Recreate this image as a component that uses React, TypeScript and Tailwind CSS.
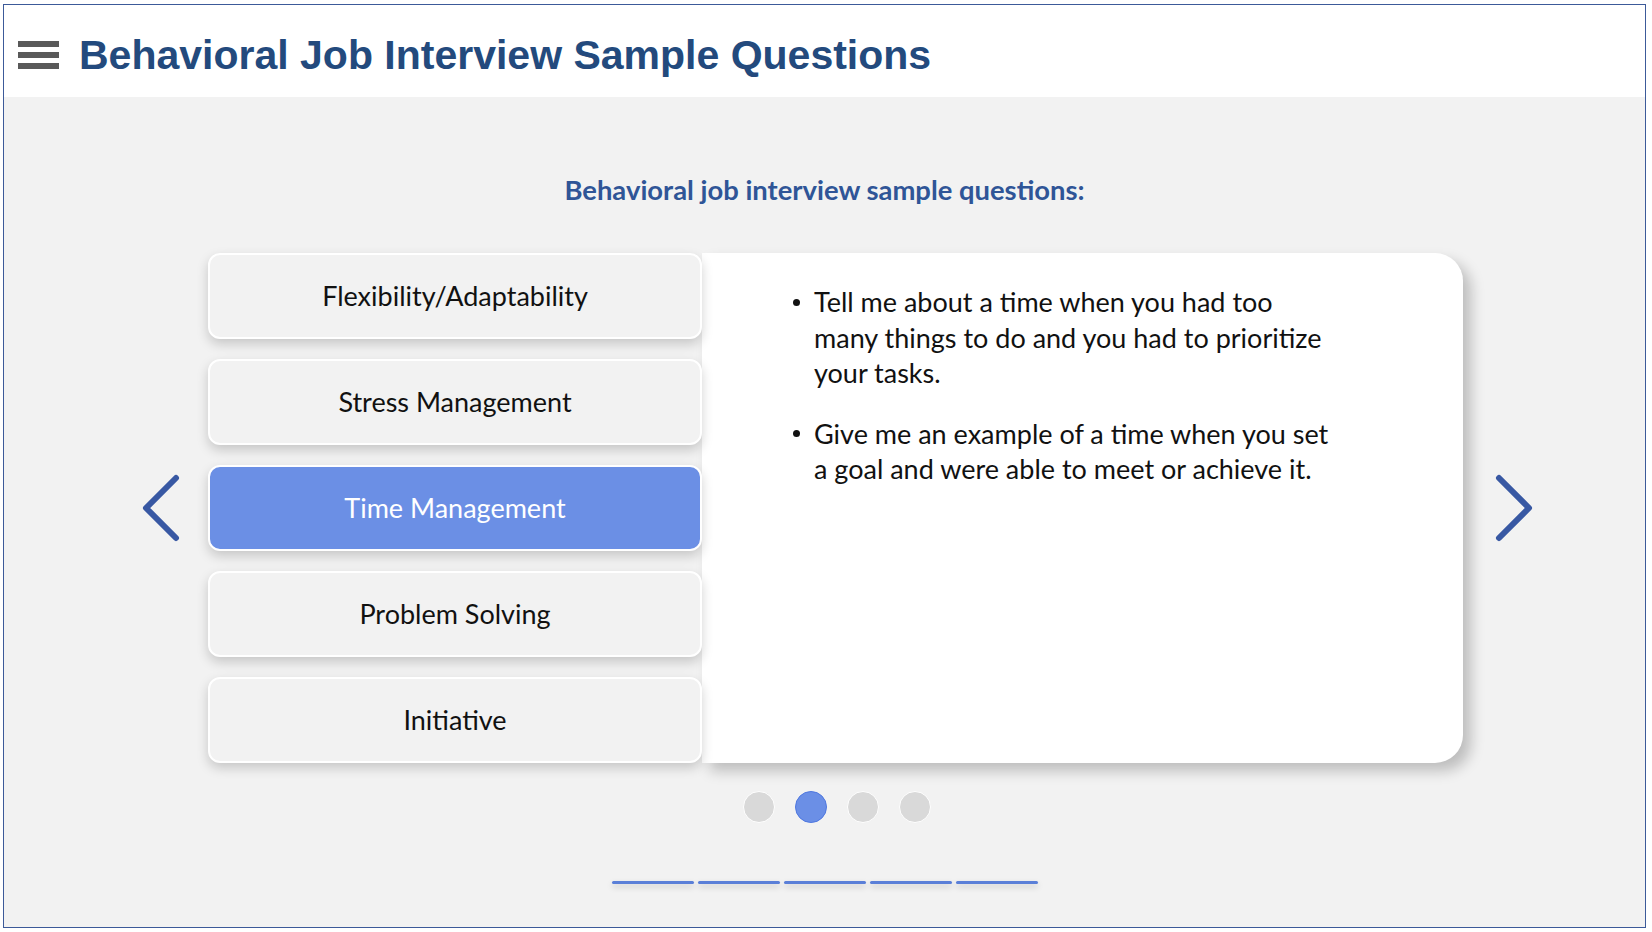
import React, { FC } from "react";

const topics = [
  "Flexibility/Adaptability",
  "Stress Management",
  "Time Management",
  "Problem Solving",
  "Initiative",
];

const Arrow: FC<{ dir: "left" | "right"; className?: string }> = ({ dir, className }) => (
  <svg viewBox="0 0 40 70" className={`w-[40px] h-[70px] shrink-0 ${className ?? ""}`}>
    <path
      d={dir === "left" ? "M35 5 L5 35 L35 65" : "M5 5 L35 35 L5 65"}
      fill="none"
      stroke="#3858a3"
      strokeWidth="6"
      strokeLinecap="round"
      strokeLinejoin="round"
    />
  </svg>
);

const Bullet: FC = () => (
  <span className="w-[21px] shrink-0 h-[35.5px] flex items-center pt-[1px]">
    <span className="w-[7px] h-[7px] rounded-full bg-[#111]" />
  </span>
);

const App: FC = () => {
  return (
    <div className="w-[1652px] h-[932px] bg-white pl-[3px] pt-[4px] font-['Lato',sans-serif]">
      <div className="w-[1643px] h-[924px] border border-[#3c5a99] flex flex-col">
        <header className="h-[92px] shrink-0 bg-white flex items-center pt-[8px] pl-[14px]">
          <div className="w-[41px] flex flex-col gap-[5px]">
            <div className="h-[6px] bg-[#595959]" />
            <div className="h-[6px] bg-[#595959]" />
            <div className="h-[6px] bg-[#595959]" />
          </div>
          <h1 className="ml-[20px] text-[41px] font-bold text-[#234a7d] font-['Liberation_Sans',Arial,sans-serif] leading-none">
            Behavioral Job Interview Sample Questions
          </h1>
        </header>

        <main className="flex-1 bg-[#f2f2f2] flex flex-col">
          <h2 className="mt-[75px] text-center text-[27.4px] leading-[36px] font-bold text-[#2f5597]">
            Behavioral job interview sample questions:
          </h2>

          <div className="mt-[45px] ml-[137px] flex items-center">
            <Arrow dir="left" />
            <div className="ml-[27px] w-[1255px] h-[510px] flex">
              <div className="relative z-10 w-[494px] shrink-0 flex flex-col gap-[20px]">
                {topics.map((t, i) => (
                  <div
                    key={t}
                    className={`h-[86px] rounded-[12px] border-2 border-white flex items-center justify-center text-[27px] shadow-[0_5px_12px_rgba(0,0,0,0.18)] ${
                      i === 2 ? "bg-[#6b8fe5] text-white" : "bg-[#f2f2f2] text-[#111]"
                    }`}
                  >
                    {t}
                  </div>
                ))}
              </div>
              <div className="flex-1 bg-white rounded-r-[28px] shadow-[8px_8px_14px_rgba(0,0,0,0.22)] pt-[31px] pl-[91px] text-[27px] leading-[35.5px] text-[#111]">
                <div className="flex">
                  <Bullet />
                  <p>
                    Tell me about a time when you had too
                    <br />
                    many things to do and you had to prioritize
                    <br />
                    your tasks.
                  </p>
                </div>
                <div className="flex mt-[25px]">
                  <Bullet />
                  <p>
                    Give me an example of a time when you set
                    <br />
                    a goal and were able to meet or achieve it.
                  </p>
                </div>
              </div>
            </div>
            <Arrow dir="right" className="ml-[31px]" />
          </div>

          <div className="mt-[28px] ml-[205px] w-[1255px] flex justify-center gap-[20px]">
            {[0, 1, 2, 3].map((d) => (
              <div
                key={d}
                className={`w-[32px] h-[32px] rounded-full ${
                  d === 1 ? "bg-[#6b8fe6] border-[1.5px] border-[#4f78e0]" : "bg-[#d9d9d9] border-[1.5px] border-white"
                }`}
              />
            ))}
          </div>

          <div className="mt-[58px] flex justify-center gap-[4px]">
            {[0, 1, 2, 3, 4].map((b) => (
              <div key={b} className="w-[82px] h-[3px] rounded-full bg-[#5a7fd8] shadow-[0_3px_6px_rgba(0,0,0,0.18)]" />
            ))}
          </div>
        </main>
      </div>
    </div>
  );
};

export default App;
